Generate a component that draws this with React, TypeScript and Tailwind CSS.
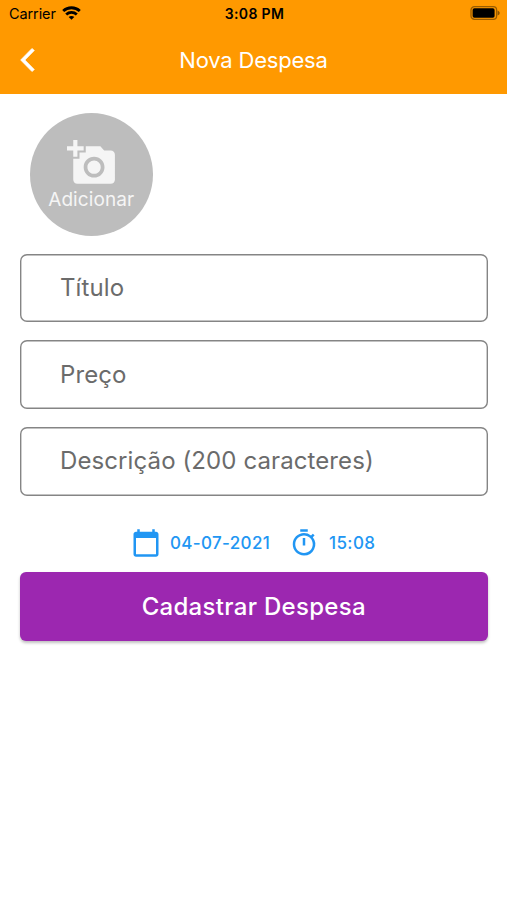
import React from 'react';
import { MdAddAPhoto, MdCalendarToday, MdOutlineTimer } from 'react-icons/md';

const FIELDS = [
  { name: 'titulo', placeholder: 'Título' },
  { name: 'preco', placeholder: 'Preço' },
  { name: 'descricao', placeholder: 'Descrição (200 caracteres)' },
];

function StatusBar() {
  return (
    <div className="grid grid-cols-3 items-center h-[27px] pl-[9px] pr-[7px] text-black">
      <div className="flex items-center gap-[6px]">
        <span className="text-[14.5px] tracking-[-0.1px]">Carrier</span>
        <svg className="-mt-[2px]" width="19" height="14" viewBox="0 0 19 14" fill="none" stroke="currentColor" strokeWidth="2.8">
          <path d="M1.2 5.1C5.8 .6 13.2 .6 17.8 5.1" />
          <path d="M4.2 8.5C7.2 5.7 11.8 5.7 14.8 8.5" />
          <path d="M9.5 13.8 6.7 11C8.2 9.6 10.8 9.6 12.3 11Z" fill="currentColor" stroke="none" />
        </svg>
      </div>
      <span className="text-center text-[14px] font-semibold tracking-[0.35px]">3:08 PM</span>
      <svg className="justify-self-end -mt-[1px]" width="30" height="14" viewBox="0 0 30 14">
        <rect x="1" y=".7" width="25.6" height="12.6" rx="3.4" fill="none" stroke="#000" strokeOpacity=".4" strokeWidth="1.3" />
        <rect x="2.6" y="2.2" width="22" height="9.6" rx="1.8" />
        <path d="M27.6 4.4C30.4 5.6 30.4 8.4 27.6 9.6Z" fillOpacity=".45" />
      </svg>
    </div>
  );
}

export default function App() {
  return (
    <div className="h-[900px] bg-white font-['Inter','Noto_Sans',sans-serif] overflow-hidden">
      {/* Header */}
      <header className="h-[94px] bg-[#ff9900]">
        <StatusBar />
        <div className="grid grid-cols-[60px_1fr_60px] items-center h-[67px] text-white">
          <button className="pl-5 pb-[2px]" aria-label="Voltar">
            <svg width="15" height="24" viewBox="0 0 12.4 19.8" fill="currentColor" stroke="currentColor" strokeWidth=".5">
              <path d="M11.9 1.97 9.9.3.5 9.9l9.4 9.6 2-1.67L4.14 9.9z" />
            </svg>
          </button>
          <h1 className="text-center text-[22px] tracking-[-0.2px]">Nova Despesa</h1>
        </div>
      </header>

      <main className="px-5 pt-[19px]">
        {/* Photo picker */}
        <button className="flex flex-col items-center w-[122.5px] h-[122.5px] ml-[10px] pt-[25px] rounded-full bg-[#bdbdbd] text-[#f5f5f5]">
          <MdAddAPhoto size={50} className="ml-[1px]" />
          <span className="text-[19px] leading-[23px] tracking-[0.1px]">Adicionar</span>
        </button>

        {/* Form fields */}
        <div className="flex flex-col gap-[18px] mt-[18px]">
          {FIELDS.map((field) => (
            <input
              key={field.name}
              name={field.name}
              placeholder={field.placeholder}
              className="h-[68.7px] w-[467.5px] rounded-[7px] px-10 pb-[1px] text-[24px] tracking-[0.1px] shadow-[inset_0_0_0_1.4px_#858585] placeholder:text-[#6b6b6b]"
            />
          ))}
        </div>

        {/* Date and time */}
        <div className="flex items-center h-[30px] mt-[32px] pl-[111px] text-[17px] font-medium text-[#2196f3]">
          <MdCalendarToday size={30} />
          <span className="ml-[9px] w-[119px] pt-[2px] tracking-[0.35px]">04-07-2021</span>
          <MdOutlineTimer size={30} />
          <span className="ml-[10px] pt-[2px] tracking-[0.4px]">15:08</span>
        </div>

        <button className="h-[69px] w-[467.5px] mt-[14.5px] rounded-[6px] bg-[#9c27b0] pt-[1px] text-[24px] font-medium tracking-[0.3px] text-white shadow-[0_2px_3px_rgba(0,0,0,0.25)]">
          Cadastrar Despesa
        </button>
      </main>
    </div>
  );
}
